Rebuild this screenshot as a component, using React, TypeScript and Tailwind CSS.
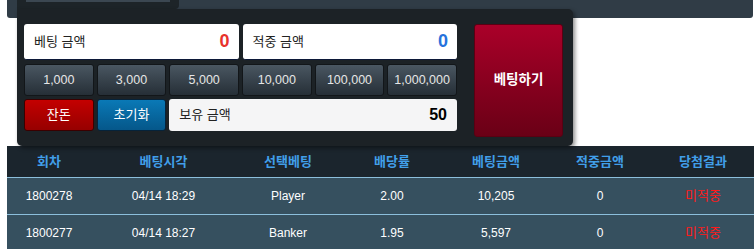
import React from "react";

const chips = ["1,000", "3,000", "5,000", "10,000", "100,000", "1,000,000"];

const rows = [
  { no: "1800278", time: "04/14 18:29", pick: "Player", odds: "2.00", amount: "10,205", win: "0", result: "미적중" },
  { no: "1800277", time: "04/14 18:27", pick: "Banker", odds: "1.95", amount: "5,597", win: "0", result: "미적중" },
];

const headers = ["회차", "베팅시각", "선택베팅", "배당률", "베팅금액", "적중금액", "당첨결과"];

export default function App() {
  return (
    <div
      className="w-[754px] h-[249px] overflow-hidden bg-white"
      style={{ fontFamily: '"Liberation Sans", "Noto Sans CJK KR", sans-serif' }}
    >
      {/* top bar */}
      <div className="ml-[7px] w-[746px] h-[18px] bg-[#303c46] rounded-b-[3px]">
        <div className="ml-[10px] w-[162px] h-[9px] bg-[#1d2428] rounded-br-[4px] px-[9px]">
          <div className="h-[2px] bg-[#3b4751]" />
        </div>
      </div>

      {/* bet panel */}
      <div className="relative z-10 -mt-[9px] ml-[17px] w-[556px] h-[137px] bg-[#1c2226] rounded-[5px] rounded-tl-none shadow-[2px_2px_4px_rgba(0,0,0,0.45)] flex pl-[7px] pt-[15px]">
        <div className="w-[433px] flex flex-col">
          <div className="grid grid-cols-2 gap-[4px] h-[36px]">
            <div className="bg-white rounded-[3px] border-b border-[#0c1838] flex items-center justify-between pl-[10px] pr-[9px]">
              <span className="text-[13px] text-[#222]">베팅 금액</span>
              <span className="text-[18px] font-bold text-[#e8322c]">0</span>
            </div>
            <div className="bg-white rounded-[3px] border-b border-[#0c1838] flex items-center justify-between pl-[10px] pr-[9px]">
              <span className="text-[13px] text-[#222]">적중 금액</span>
              <span className="text-[18px] font-bold text-[#2672dc]">0</span>
            </div>
          </div>
          <div className="grid grid-cols-6 gap-[3px] h-[32px] mt-[4px]">
            {chips.map((c) => (
              <button
                key={c}
                className="rounded-[3px] border border-[#121619] bg-gradient-to-b from-[#4a5762] to-[#262f37] text-[12.5px] text-[#e6e6e6] flex items-center justify-center"
              >
                {c}
              </button>
            ))}
          </div>
          <div className="grid grid-cols-6 gap-[3px] h-[32px] mt-[3px]">
            <button className="rounded-[3px] border border-[#3a0000] bg-gradient-to-b from-[#c40000] to-[#960000] text-[13px] text-white flex items-center justify-center">
              잔돈
            </button>
            <button className="rounded-[3px] border border-[#06233a] bg-gradient-to-b from-[#0a79b6] to-[#05578a] text-[13px] text-white flex items-center justify-center">
              초기화
            </button>
            <div className="col-span-4 bg-[#f5f5f6] rounded-[3px] flex items-center justify-between pl-[10px] pr-[10px]">
              <span className="text-[13px] text-[#222]">보유 금액</span>
              <span className="text-[16px] font-bold text-black">50</span>
            </div>
          </div>
        </div>
        <button className="ml-[17px] w-[89px] h-[113px] rounded-[3px] border border-[#5a0012] bg-gradient-to-b from-[#aa0029] to-[#6a0016] text-white text-[13.5px] font-bold flex items-center justify-center">
          베팅하기
        </button>
      </div>

      {/* table */}
      <div className="ml-[7px] w-[747px]">
        <div className="grid grid-cols-[84px_145px_104px_104px_104px_104px_1fr] h-[32px] bg-[#1b252d] border-b border-[#8cbfdc]">
          {headers.map((h) => (
            <div key={h} className="flex items-center justify-center text-[13px] font-bold text-[#419fe9]">
              {h}
            </div>
          ))}
        </div>
        {rows.map((r) => (
          <div
            key={r.no}
            className="grid grid-cols-[84px_145px_104px_104px_104px_104px_1fr] h-[37px] bg-[#36505f] border-b border-[#8cbfdc] text-[12px] text-white"
          >
            <div className="flex items-center justify-center">{r.no}</div>
            <div className="flex items-center justify-center">{r.time}</div>
            <div className="flex items-center justify-center">{r.pick}</div>
            <div className="flex items-center justify-center">{r.odds}</div>
            <div className="flex items-center justify-center">{r.amount}</div>
            <div className="flex items-center justify-center">{r.win}</div>
            <div className="flex items-center justify-center text-[13px] text-[#ff1a1a]">{r.result}</div>
          </div>
        ))}
      </div>
    </div>
  );
}
